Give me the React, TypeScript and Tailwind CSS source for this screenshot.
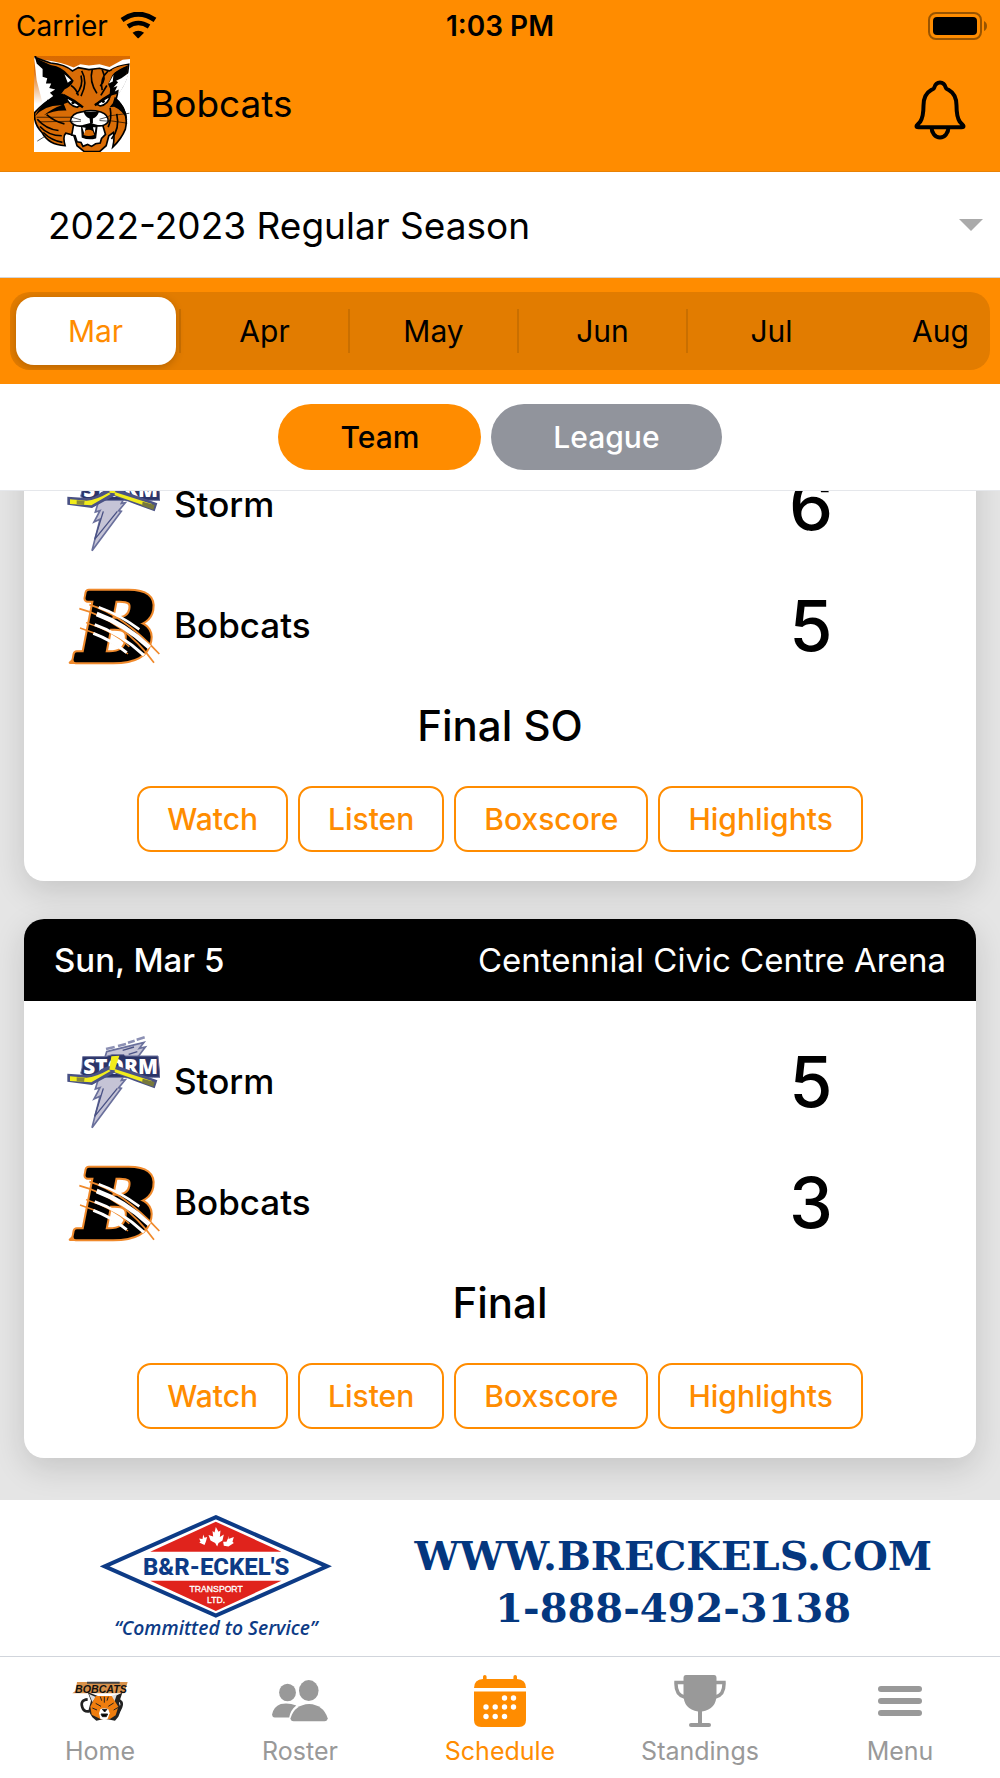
import clsx from "clsx"

const months = ["Mar", "Apr", "May", "Jun", "Jul", "Aug"]

const gameLinks = ["Watch", "Listen", "Boxscore", "Highlights"]

const games = [
  {
    id: 1,
    date: "",
    venue: "",
    status: "Final SO",
    teams: [
      { name: "Storm", score: 6 },
      { name: "Bobcats", score: 5 },
    ],
  },
  {
    id: 2,
    date: "Sun, Mar 5",
    venue: "Centennial Civic Centre Arena",
    status: "Final",
    teams: [
      { name: "Storm", score: 5 },
      { name: "Bobcats", score: 3 },
    ],
  },
]

const tabs = [
  { label: "Home", icon: HomeLogo },
  { label: "Roster", icon: RosterIcon },
  { label: "Schedule", icon: CalendarIcon },
  { label: "Standings", icon: TrophyIcon },
  { label: "Menu", icon: MenuIcon },
]

function WifiIcon() {
  return (
    <svg viewBox="361 30 110 82" className="h-[27px] w-[37px]" aria-hidden="true">
      <path d="M366 54Q415 19 466 54" fill="none" stroke="#000" strokeWidth="15" />
      <path d="M384 74Q415 53 448 74" fill="none" stroke="#000" strokeWidth="14" />
      <path d="M398 93Q415 81 433 93L417 109Q415 111 413 109Z" />
    </svg>
  )
}

function BatteryIcon() {
  return (
    <svg viewBox="0 0 60 28" className="h-[28px] w-[60px]" aria-hidden="true">
      <rect x="1" y="1" width="52" height="26" rx="7" fill="none" stroke="#000" strokeOpacity=".4" strokeWidth="2" />
      <rect x="5" y="5" width="44" height="18" rx="4" />
      <path d="M56 9q3 1.500 3 5t-3 5z" fillOpacity=".4" />
    </svg>
  )
}

function BellIcon() {
  return (
    <svg
      viewBox="0 0 52 60"
      className="h-[60px] w-[52px]"
      fill="none"
      stroke="#000"
      strokeWidth="4"
      strokeLinejoin="round"
      aria-hidden="true"
    >
      <path d="M26 2.500c-3 0-4.800 1.800-5.800 5.200-.4 1.400-1.600 1.500-3 2.300-5.600 3.100-7.700 8.600-7.700 15.500 0 8.500-.5 12-3.300 16.300-1.700 2.300-3.700 3.200-3.700 4.200 0 .9.900 1.300 2 1.300h43c1.100 0 2-.4 2-1.300 0-1-2-1.900-3.700-4.200-2.800-4.300-3.300-7.800-3.300-16.300 0-6.900-2.100-12.400-7.700-15.500-1.400-.8-2.600-.9-3-2.300C30.800 4.300 29 2.500 26 2.500Z" />
      <path d="M17.500 47c0 6 3.800 10.500 8.500 10.500s8.500-4.500 8.500-10.500" />
    </svg>
  )
}

function BobcatHead() {
  return (
    <svg viewBox="102 167 290 290" className="size-24" aria-hidden="true">
      <defs>
        <linearGradient id="sky" x1="0" y1="0" x2="0" y2="1">
          <stop offset="0" stopColor="#d96a00" />
          <stop offset=".15" stopColor="#dd6f0c" />
          <stop offset=".5" stopColor="#fff" />
        </linearGradient>
      </defs>
      <rect x="102" y="167" width="290" height="290" fill="url(#sky)" />
      <path
        d="M102 170l28 8q60 8 92 24l20-10 26 4 32-4 30 8 40-22 22-2v305H102V340l26-30-18-70z"
        fill="#fff"
      />
      {/* ears and face */}
      <path
        d="M106 172l46 16q44 4 66 24l18-10 32 6 32-4 30 8q24-16 58-20-2 48-34 90l-4 16q40 36 28 90-12 30-38 54 6-26 2-44l-14 10-8 30-20 18h-46l-22-18-10-32-24-6q-10 10-2 38-50-2-70-40-26-26-22-60 26-30 58-46-40-60-56-126z"
        fill="#d96c06"
        stroke="#000"
        strokeWidth="5"
      />
      <path d="M108 174l44 20q38 6 54 30l16 18q-8 18-28 26l-32 44-28 8 12-28q-24-56-38-118z" />
      <path d="M110 190l18 16 0 24 14 4-4 16 16 0-6 14 18 4-16 10 10 10-16 12q-28-50-34-110zM194 222l20 18-10 8z" fill="#fff" />
      <path d="M386 196q-4 46-34 86l-22 6 2-22-6-14 12-26q14-22 48-30z" />
      <path d="M388 218q-8 34-32 66l2-16-12 6 8-16-12 4 14-16-6-4 16-8zM342 224l-14 26 12-6z" fill="#fff" />
      <path d="M338 208q20-12 48-14-26 12-46 26z" fill="#d96c06" />
      {/* forehead stripes */}
      <path
        d="M246 212q20 34-2 76m34-80q-10 36 14 72m16-72q14 30-6 50m-58-32q8 32-14 56m96-70q-26 24-18 58M214 256q16 10 22 30m86-30-18 30"
        fill="none"
        stroke="#000"
        strokeWidth="5"
      />
      {/* cheek fur */}
      <path d="M188 280q-56 14-84 70 32-36 82-34-30 10-54 30 30-16 68-14l-8-20 16-6z" />
      <path d="M346 290q34 26 38 70-16-30-40-40l-14 2 10-12z" />
      <path
        d="M112 358q26 30 64 34m-56-12q26 28 66 28m-56-10q24 24 58 30m-48-84q26 22 54 28m158-30q10 44-16 76m-4-94q6 32-6 58"
        fill="none"
        stroke="#000"
        strokeWidth="5"
      />
      {/* eyes */}
      <path d="M198 290l44 26-10 6q-26-6-34-32zM332 288l-42 24 12 6q24-4 30-30z" fill="#fff" stroke="#000" strokeWidth="5" />
      <path d="M190 284q34 16 60 38M336 282q-26 14-50 34" fill="none" stroke="#000" strokeWidth="7" />
      <circle cx="220" cy="308" r="5" />
      <circle cx="311" cy="304" r="5" />
      {/* chin */}
      <path
        d="M222 372l-6 34 10 2 6 18 12 2 6 12 14-6 12 6 12-8 14-2 4-14 12-12-10-34z"
        fill="#fff"
        stroke="#000"
        strokeWidth="5"
      />
      {/* muzzle */}
      <path
        d="M246 336q26-8 58 0 24 8 22 30-10 14-32 12l-22-6-22 6q-28 4-38-14 2-24 34-28z"
        fill="#fff"
        stroke="#000"
        strokeWidth="5"
      />
      <path d="M252 336h46q-4 14-18 20v14l-8 4-2-18q-14-6-18-20z" />
      <path
        d="M216 352l28 8m-28 6 28-2m84-14-28 8m28 6-28-2M110 352h110m0 12-104 2m212-18 62-8m-62 22 56 8M112 424l26-16"
        fill="none"
        stroke="#000"
        strokeWidth="2"
      />
      <path d="M246 380q24-6 46 0l-4 34q-20 6-40-2z" stroke="#000" strokeWidth="4" />
      <path d="M254 394q14-8 26 0l4 12q-18 6-32 0z" fill="#d96c06" />
      <path d="M248 382l6 20 4-18zM288 382h-8l5 18z" fill="#fff" />
    </svg>
  )
}

function StormLogo() {
  return (
    <svg viewBox="48 72 282 282" className="size-[94px]" aria-hidden="true">
      <path
        d="M170 122l112-28-14 18 18-4-18 24-34 40-20 36 12-2-20 24 8 2-88 118 24-94-18 8 18-34-14 4z"
        fill="#c5c4d6"
        stroke="#6a709c"
        strokeWidth="5"
      />
      <path d="M202 232L134 316l26-84M252 108l-34 10m44 4-26 8" fill="none" stroke="#4a5285" strokeWidth="4" />
      <path d="M168 114l26-6m10-3 24-6m6-4 20-6m6-3 24-7" stroke="#8c90b4" strokeWidth="8" />
      <path d="M98 137h68l20-6h36l4 4h98l6 64-20 0-204 0-14-12 4-16z" fill="#2b3468" stroke="#6a709c" strokeWidth="3" />
      <text x="100" y="188" fontFamily="'Open Sans', sans-serif" fontWeight="800" fontSize="62" fill="#fff">
        STORM
      </text>
      <path d="M52 188l56 4q30 0 46-18l20-8 32 0 116 42-8 24-60-22-62-24-66 36-74-10z" fill="#4a5285" />
      <path d="M60 196l50 4q28-2 66-24l6 4-58 34-64-4z" fill="#f1ec1c" />
      <path d="M80 199l24 1-2 13-22-2z" fill="#8a8a3a" />
      <path d="M194 174l112 36-2 12-110-38z" fill="#f1ec1c" />
      <path d="M278 203l36 10-4 14-34-12z" fill="#77783c" />
      <path d="M184 136l24-2-14 44-16-2z" fill="#f1ec1c" />
    </svg>
  )
}

function BobcatsLogo() {
  return (
    <svg viewBox="48 435 282 282" className="size-[94px]" aria-hidden="true">
      <g
        fontFamily="'DejaVu Serif', serif"
        fontStyle="italic"
        fontWeight="700"
        fontSize="276"
        strokeLinejoin="round"
      >
        <path d="M110 642l-50 44h90z" fill="#f08a2c" stroke="#f08a2c" strokeWidth="8" />
        <text x="84" y="677" fill="#000" stroke="#f08a2c" strokeWidth="26" paintOrder="stroke">
          B
        </text>
        <text x="84" y="677" fill="#000" stroke="#000" strokeWidth="14" aria-hidden="true">
          B
        </text>
      </g>
      <path d="M108 654l-30 28h70z" />
      {/* claw marks */}
      <g stroke="#f08a2c" fill="none">
        <path d="M118 512q100 30 210 148" strokeWidth="5" />
        <path d="M88 524q130 34 224 162" strokeWidth="5" />
        <path d="M108 566q80 24 130 72" strokeWidth="4" />
        <path d="M90 582q80 24 144 78" strokeWidth="4" />
      </g>
      <g stroke="#fff" fill="none">
        <path d="M146 520q62 22 122 66" strokeWidth="8" />
        <path d="M140 540q84 30 158 100" strokeWidth="14" />
        <path d="M134 572q76 26 148 92" strokeWidth="9" />
        <path d="M130 598q54 20 100 58" strokeWidth="9" />
      </g>
    </svg>
  )
}

function SponsorLogo() {
  return (
    <svg viewBox="30 40 700 390" className="h-[130px] w-[233px]" role="img" aria-label="B&R-Eckel's Transport Ltd.">
      <path d="M378 52L712 200 378 348 44 200z" fill="#fff" stroke="#0d3b86" strokeWidth="12" />
      <path d="M378 66L575 156H181z" fill="#e0231c" />
      <path d="M378 334L575 243H181z" fill="#e0231c" />
      <path
        d="M378 82l8 14 6-4-2 20 12-8-4 18-12 8-4 10-6-10-14-8-6-16 14 4-2-16 6 4zM340 104l4 10 8-2-4 14-4 10-16-8 4-2-4-10 10 2zM418 108l-2 10 16-6-4 14 4 4-16 10-14-2-2-12 10 0z"
        fill="#fff"
      />
      <text x="379" y="227" textAnchor="middle" fontFamily="Roboto, sans-serif" fontWeight="800" fontSize="72" fill="#0d3b86">
        B&amp;R-ECKEL'S
      </text>
      <g fontFamily="'Liberation Sans', sans-serif" fontSize="26" fill="#fff" stroke="#fff" textAnchor="middle">
        <text x="379" y="277">
          TRANSPORT
        </text>
        <text x="379" y="309">
          LTD.
        </text>
      </g>
      <text
        x="378"
        y="406"
        textAnchor="middle"
        fontFamily="'Open Sans', sans-serif"
        fontStyle="italic"
        fontWeight="600"
        fontSize="58"
        fill="#0d3b86"
      >
        “Committed to Service”
      </text>
    </svg>
  )
}

function HomeLogo() {
  return (
    <svg viewBox="214 118 174 126" className="h-[42px] w-[58px]" aria-hidden="true">
      <path d="M232 124h152l-10 34H218l10-8z" fill="#d9924a" />
      <path d="M262 123h98v6h-98z" fill="#444" />
      <text
        x="226"
        y="156"
        fontFamily="'Liberation Sans', sans-serif"
        fontStyle="italic"
        fontWeight="700"
        fontSize="32"
        fill="#111"
      >
        BOBCATS
      </text>
      <path d="M264 176q-24 2-16 24 4 14 20 12M350 176q22 4 14 24-4 12-18 12" fill="none" stroke="#222" strokeWidth="8" />
      <path d="M264 154l10 26-8 30 12 20 12 10 26-6 30 6 10-12 8-20-6-22 10-30-28 12h-40z" fill="#222" />
      <path d="M268 160l22 10-12 14zM352 160l-22 8 14 16z" fill="#ddd" />
      <path d="M288 166h48l20 32-8 26-16 10-8 2h-20l-28-14-4-24z" fill="#ef7d0e" />
      <path d="M302 206q12-6 24 0l4 12-6 16-10 5-12-5-4-16z" fill="#fff" />
      <path
        d="M308 206h14l-7 8zM304 220h20l-4 8h-12zM288 188l16 9m38-10-16 10M314 168v18m-12-18 4 12m20-12-4 12m-44 22 14 6m64-8-14 8"
        stroke="#222"
        strokeWidth="3"
      />
    </svg>
  )
}

function RosterIcon() {
  return (
    <svg viewBox="816 120 166 124" className="h-[42px] w-14" fill="currentColor" aria-hidden="true">
      <ellipse cx="862" cy="157" rx="25" ry="26" />
      <ellipse cx="925" cy="151" rx="29" ry="31" />
      <path d="M888 195q-22-8-46-4-22 8-26 32 1 8 8 8h43q3-22 21-36z" />
      <path d="M926 191q42 2 55 42-1 9-9 9h-92q-9 0-9-9 12-40 55-42z" />
    </svg>
  )
}

function CalendarIcon() {
  return (
    <svg viewBox="0 0 52 52" className="size-[52px]" fill="currentColor" aria-hidden="true">
      <path d="M9 1.800a1.800 1.800 0 0 1 3.600 0V4h26.800V1.800a1.800 1.800 0 0 1 3.600 0V4q9 .5 9 9H0q0-8.500 9-9z" />
      <path d="M0 16.500h52V45q0 7-7 7H7q-7 0-7-7z" />
      <g fill="#fff">
        <circle cx="30.500" cy="23" r="2.700" />
        <circle cx="39.500" cy="23" r="2.700" />
        <circle cx="12" cy="32" r="2.700" />
        <circle cx="21.200" cy="32" r="2.700" />
        <circle cx="30.500" cy="32" r="2.700" />
        <circle cx="39.500" cy="32" r="2.700" />
        <circle cx="12" cy="41.500" r="2.700" />
        <circle cx="21.200" cy="41.500" r="2.700" />
        <circle cx="30.500" cy="41.500" r="2.700" />
      </g>
    </svg>
  )
}

function TrophyIcon() {
  return (
    <svg viewBox="0 0 52 52" className="size-[52px]" fill="currentColor" aria-hidden="true">
      <path d="M12 0h28q2.500 0 2.500 3v17q0 14-14.500 16.500V48h-4V36.500Q9.500 34 9.500 20V3q0-3 2.500-3z" />
      <path d="M10 7.500H2Q1.500 20 10.500 22M42 7.500h8Q50.500 20 41.500 22" fill="none" stroke="currentColor" strokeWidth="3.500" />
      <rect x="15" y="48" width="22" height="4" rx="2" />
    </svg>
  )
}

function MenuIcon() {
  return (
    <svg viewBox="0 0 44 30" className="h-[30px] w-11" fill="currentColor" aria-hidden="true">
      <rect width="44" height="6" rx="3" />
      <rect y="12" width="44" height="6" rx="3" />
      <rect y="24" width="44" height="6" rx="3" />
    </svg>
  )
}

function GameCard({ game }: { game: (typeof games)[number] }) {
  return (
    <article className="shrink-0 overflow-clip rounded-[20px] bg-white shadow-[0_10px_32px_rgba(0,0,0,0.14)]">
      {game.date && (
        <header className="flex h-[82px] items-center justify-between bg-black px-[30px] pt-[2px] text-[33px] text-white">
          <h2 className="font-medium">{game.date}</h2>
          <p>{game.venue}</p>
        </header>
      )}
      <div className="pt-5 pb-[29px]">
        {game.teams.map((team) => (
          <div key={team.name} className="flex h-[121px] items-center pl-[42px] font-medium">
            {team.name === "Storm" ? <StormLogo /> : <BobcatsLogo />}
            <span className="ml-[14px] flex-1 text-[35px]">{team.name}</span>
            <span className="w-[330px] text-center text-[70px] leading-none">{team.score}</span>
          </div>
        ))}
        <p className="text-center text-[42px] leading-[80px] font-medium">{game.status}</p>
        <div className="mt-5 flex justify-center gap-[10px]">
          {gameLinks.map((link) => (
            <button
              key={link}
              type="button"
              className="h-[66px] rounded-[14px] border-2 border-[#ff8c00] px-7 text-[30px] font-medium text-[#ff8c00]"
            >
              {link}
            </button>
          ))}
        </div>
      </div>
    </article>
  )
}

export default function App() {
  return (
    <div className="flex h-screen flex-col bg-white font-['Inter',sans-serif] text-black">
      <header className="border-b border-[#e88206] bg-[#ff8c00]">
        <div className="grid h-[51px] grid-cols-3 items-center px-3 text-[28px]">
          <div className="flex items-center gap-3 pl-1">
            <span>Carrier</span>
            <WifiIcon />
          </div>
          <time className="text-center font-semibold">1:03 PM</time>
          <div className="flex justify-end">
            <BatteryIcon />
          </div>
        </div>
        <div className="flex items-center px-[34px] pt-[5px] pb-[19px]">
          <BobcatHead />
          <h1 className="ml-5 flex-1 text-[37px]">Bobcats</h1>
          <button type="button" aria-label="Notifications" className="pt-3">
            <BellIcon />
          </button>
        </div>
      </header>

      <div className="relative border-b border-gray-300">
        <select
          aria-label="Season"
          className="h-[105px] w-full appearance-none bg-white pt-[2px] pr-16 pl-12 text-[37px] outline-none"
        >
          <option>2022-2023 Regular Season</option>
        </select>
        <svg
          viewBox="0 0 24 12"
          className="pointer-events-none absolute top-1/2 right-[17px] h-3 w-6 -translate-y-1/2 fill-[#aaa]"
          aria-hidden="true"
        >
          <path d="M0 0h24L12 12z" />
        </svg>
      </div>

      <div className="bg-[#ff8c00] px-[10px] py-[14px]">
        <div className="flex h-[78px] items-center overflow-hidden rounded-[20px] bg-[#e27c00] pl-[2px]">
          {months.map((month, i) => (
            <div
              key={month}
              className={clsx(
                "flex h-[44px] w-[169px] shrink-0 items-center justify-center border-r-2",
                i < 4 ? "border-[#c96f00]" : "border-transparent"
              )}
            >
              <button
                type="button"
                aria-pressed={i === 0}
                className={clsx(
                  "h-[68px] w-[160px] shrink-0 rounded-[18px] text-[30px]",
                  i === 0 && "bg-white text-[#ff8c00] shadow-[0_2px_8px_rgba(0,0,0,0.2)]"
                )}
              >
                {month}
              </button>
            </div>
          ))}
        </div>
      </div>

      <div className="flex justify-center gap-[10px] border-b border-gray-200 py-5 text-[30px] font-medium">
        <button type="button" aria-pressed="true" className="h-[66px] rounded-full bg-[#ff8c00] px-[62px]">
          Team
        </button>
        <button type="button" aria-pressed="false" className="h-[66px] rounded-full bg-[#91949c] px-[62px] text-white">
          League
        </button>
      </div>

      <main className="flex min-h-0 flex-1 flex-col justify-end gap-[38px] overflow-hidden bg-[#e5e5e5] px-6 pb-[42px]">
        {games.map((game) => (
          <GameCard key={game.id} game={game} />
        ))}
      </main>

      <aside className="flex h-[156px] items-center justify-between pr-[68px] pl-[100px]">
        <SponsorLogo />
        <p className="pt-2 text-center font-['DejaVu_Serif',serif] text-[40px] leading-[52px] font-bold text-[#04377f]">
          WWW.BRECKELS.COM
          <br />
          1-888-492-3138
        </p>
      </aside>

      <nav className="grid grid-cols-5 border-t border-gray-300 pt-[18px] pb-[9px] text-[25px] text-[#999]">
        {tabs.map(({ label, icon: Icon }) => (
          <a
            key={label}
            href="#"
            className={clsx("flex flex-col items-center", label === "Schedule" && "text-[#ff8c00]")}
          >
            <span className="flex h-[52px] items-center">
              <Icon />
            </span>
            <span className="mt-[6px] leading-[36px]">{label}</span>
          </a>
        ))}
      </nav>
    </div>
  )
}
